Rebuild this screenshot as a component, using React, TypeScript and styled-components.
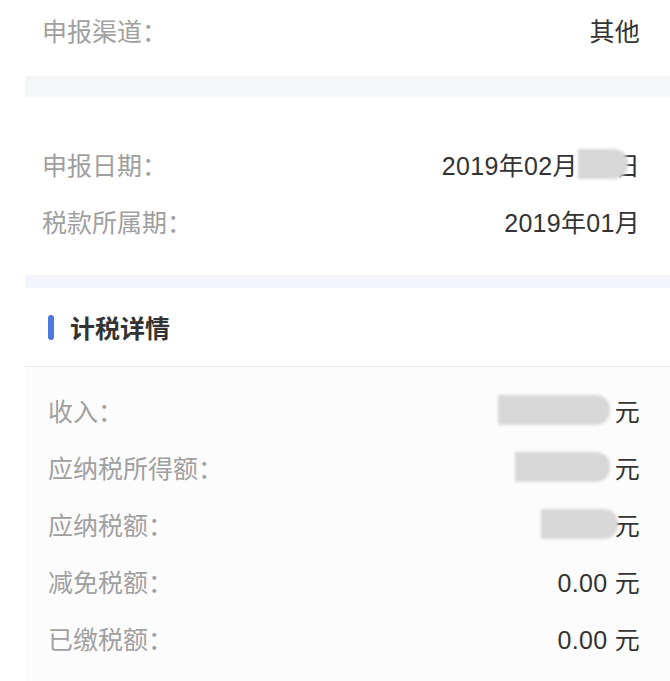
import React from 'react';
import styled, { createGlobalStyle } from 'styled-components';

const GlobalStyle = createGlobalStyle`
  html, body {
    margin: 0;
    padding: 0;
    background: #fff;
  }
  body {
    font-family: "Liberation Sans", "Noto Sans CJK SC", sans-serif;
  }
`;

const Page = styled.div`
  display: flex;
  flex-direction: column;
  width: 670px;
  height: 681px;
  overflow: hidden;
  padding-left: 25px;
  box-sizing: border-box;
  background: #fff;
`;

const Section = styled.div<{ $top: number; $bottom: number; $inset: number; $bg?: string; $grow?: boolean }>`
  display: flex;
  flex-direction: column;
  flex: ${(p) => (p.$grow ? 1 : 'none')};
  padding: ${(p) => p.$top}px 30px ${(p) => p.$bottom}px ${(p) => p.$inset}px;
  background: ${(p) => p.$bg || '#fff'};
`;

const Band = styled.div<{ $h: number; $color: string }>`
  flex: none;
  height: ${(p) => p.$h}px;
  background: ${(p) => p.$color};
`;

const Row = styled.div`
  display: flex;
  align-items: center;
  justify-content: space-between;
  height: 57px;
  font-size: 25px;
`;

const Label = styled.span`
  color: #a0a0a0;
`;

const Value = styled.span`
  color: #333;
  display: flex;
  align-items: center;
  white-space: pre;
  letter-spacing: 0.3px;
`;

const Blob = styled.span<{ $w: number; $h: number; $shift?: number }>`
  display: inline-block;
  position: relative;
  z-index: 1;
  width: ${(p) => p.$w}px;
  height: ${(p) => p.$h}px;
  margin-right: ${(p) => p.$shift || 0}px;
  border-radius: 0 14px 14px 0;
  background: #d7d7d7;
  filter: blur(1.5px);
`;

const Heading = styled.div`
  flex: none;
  display: flex;
  align-items: center;
  gap: 16px;
  height: 78px;
  padding-left: 23px;
  border-bottom: 1px solid #ececef;
  font-size: 25px;
  font-weight: bold;
  color: #333;
`;

const Bar = styled.span`
  width: 6px;
  height: 25px;
  border-radius: 3px;
  background: #4a78dc;
`;

export default function App() {
  return (
    <Page>
      <GlobalStyle />
      <Section $top={1} $bottom={18} $inset={17}>
        <Row>
          <Label>申报渠道：</Label>
          <Value>其他</Value>
        </Row>
      </Section>
      <Band $h={21} $color="#f5f6f8" />
      <Section $top={38} $bottom={26} $inset={17}>
        <Row>
          <Label>申报日期：</Label>
          <Value>
            2019年02月
            <Blob $w={50} $h={30} $shift={-13} />
            日
          </Value>
        </Row>
        <Row>
          <Label>税款所属期：</Label>
          <Value>2019年01月</Value>
        </Row>
      </Section>
      <Band $h={13} $color="#f4f5fb" />
      <Heading>
        <Bar />
        计税详情
      </Heading>
      <Section $top={14} $bottom={0} $inset={23} $bg="#fcfcfd" $grow>
        <Row>
          <Label>收入：</Label>
          <Value>
            <Blob $w={112} $h={30} $shift={5} />元
          </Value>
        </Row>
        <Row>
          <Label>应纳税所得额：</Label>
          <Value>
            <Blob $w={95} $h={30} $shift={5} />元
          </Value>
        </Row>
        <Row>
          <Label>应纳税额：</Label>
          <Value>
            <Blob $w={77} $h={30} $shift={-3} />元
          </Value>
        </Row>
        <Row>
          <Label>减免税额：</Label>
          <Value>0.00 元</Value>
        </Row>
        <Row>
          <Label>已缴税额：</Label>
          <Value>0.00 元</Value>
        </Row>
      </Section>
    </Page>
  );
}
